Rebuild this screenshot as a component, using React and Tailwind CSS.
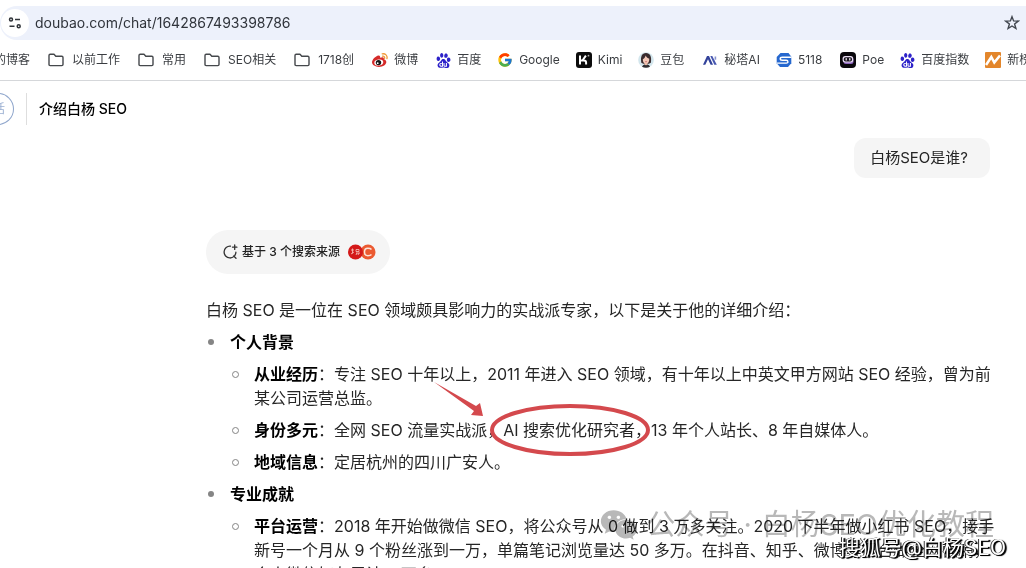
import { FaWeixin } from 'react-icons/fa';
import { SiBaidu } from 'react-icons/si';
import { FcGoogle } from 'react-icons/fc';

function FolderIcon() {
  return (
    <svg viewBox="0 0 16 16" className="w-4 h-4 shrink-0" fill="none" stroke="#45484c" strokeWidth="1.4" strokeLinejoin="round">
      <path d="M1 3.6Q1 2.3 2.2 2.3H6l1.8 2h6Q15 4.3 15 5.5v7q0 1.1-1.2 1.1H2.2Q1 13.600 1 12.5Z" />
    </svg>
  );
}

function WeiboIcon() {
  return (
    <svg viewBox="0 0 16 16" className="w-4 h-4 shrink-0">
      <path d="M6.5 3.400C3.500 3.900 0 7.500 0 10.300c0 2.700 3.200 4.600 6.900 4.600 4.200 0 7.400-2.400 7.400-4.900 0-1.500-1.200-2.400-2.500-2.700.5-1.700-.5-2.900-3.700-1.600.3-1.400-.2-2.500-1.600-2.300Z" fill="#d52b2a" />
      <ellipse cx="6.800" cy="10.500" rx="4.500" ry="3" fill="#fff" transform="rotate(-8 6.800 10.500)" />
      <circle cx="6.500" cy="10.600" r="2.700" fill="#161616" />
      <circle cx="5.700" cy="11.200" r=".9" fill="#fff" />
      <path d="M10.200 1.900c3-.8 5.600 1.700 4.700 4.800M10.500 4.200c1.500-.3 2.500.7 2.100 2.100" fill="none" stroke="#f19a38" strokeWidth="1.3" strokeLinecap="round" />
    </svg>
  );
}

function BaiduIcon() {
  return <SiBaidu className="w-[15px] h-[15px] shrink-0" color="#2d22c9" />;
}

function GoogleIcon() {
  return <FcGoogle className="w-4 h-4 shrink-0" />;
}

function KimiIcon() {
  return (
    <svg viewBox="0 0 16 16" className="w-4 h-4 shrink-0">
      <rect width="16" height="16" rx="3" fill="#0c0c0c" />
      <path d="M4 3.5v9M4.500 8.6h3.400q2.200 0 2.200 2v1.900M6.800 8 9.900 3.7" fill="none" stroke="#fff" strokeWidth="2" />
      <circle cx="12.500" cy="3.700" r=".9" fill="#aaa" />
    </svg>
  );
}

function DoubaoIcon() {
  return (
    <svg viewBox="0 0 16 16" className="w-4 h-4 shrink-0">
      <circle cx="8" cy="8" r="7.800" fill="#d3e6ed" />
      <path d="M3.300 10.800C2.300 4.500 3.800 1 8 1s5.700 3.500 4.900 9.800l-2 1H5.200Z" fill="#3a2c2e" />
      <path d="M4.800 7.200C6.700 6.500 7.300 4.800 7.600 3.500c1 1.900 2.300 2.700 3.700 3.300 0 3.200-1.200 5-3.300 5s-3.200-1.800-3.200-4.600Z" fill="#f3c9b9" />
      <path d="M6.700 11h2.600l.3 2H6.300Z" fill="#edbda9" />
      <path d="M4 14.800q.8-2.100 2.500-2.300 1.500 1.300 3 0 2 .2 2.500 2.300-4 1.900-8 0Z" fill="#302c30" />
      <path d="M7.200 9.700h1.700" stroke="#b9474e" strokeWidth=".7" />
    </svg>
  );
}

function MetasoIcon() {
  return (
    <svg viewBox="0 0 16 16" className="w-4 h-4 shrink-0">
      <path d="M1 12.800 5 4h2l4 8.800H8.600L6 7.200l-2.700 5.600Z" fill="#33439b" />
      <path d="M8.300 4h2l4.500 8.800h-2.500Z" fill="#4757b0" />
      <path d="M12.600 4.500h1.600v3.200h-1.600Z" fill="#8994cf" />
    </svg>
  );
}

function Icon5118() {
  return (
    <svg viewBox="0 0 16 16" className="w-4 h-4 shrink-0">
      <path d="M4.500 1h8l2.800 3.700v6.500L12 15H4L.7 11.300V5Z" fill="#2668cf" />
      <path d="M15.500 5.200H6.200q-2 0-2 1.500t2 1.500h4q1.700 0 1.700 1.500t-1.700 1.400H.7" fill="none" stroke="#fff" strokeWidth="1.4" />
    </svg>
  );
}

function PoeIcon() {
  return (
    <svg viewBox="0 0 16 16" className="w-4 h-4 shrink-0">
      <rect width="16" height="16" rx="4" fill="#0a080c" />
      <rect x="3.500" y="5.200" width="10" height="6.800" rx="2.500" fill="#8d64bd" />
      <rect x="2.600" y="4" width="10.600" height="6.600" rx="2.500" fill="#e8dcf2" />
      <rect x="3.800" y="5.200" width="8.200" height="4.200" rx="1.700" fill="#19131e" />
      <path d="M6.200 6.500V8M9.800 6.500V8" stroke="#fff" strokeWidth="1.2" strokeLinecap="round" />
    </svg>
  );
}

function NewrankIcon() {
  return (
    <svg viewBox="0 0 16 16" className="w-4 h-4 shrink-0">
      <rect width="16" height="16" rx="1" fill="#e3862b" />
      <path d="m1 13 5.300-8 3 5.500 5.700-7" fill="none" stroke="#fff" strokeWidth="2.6" />
    </svg>
  );
}

const bookmarks = [
  { name: '以前工作', icon: FolderIcon, gap: 'gap-2', margin: 'mr-[18px]' },
  { name: '常用', icon: FolderIcon, gap: 'gap-2', margin: 'mr-[18px]' },
  { name: 'SEO相关', icon: FolderIcon, gap: 'gap-2', margin: 'mr-[18px]' },
  { name: '1718创', icon: FolderIcon, gap: 'gap-2', margin: 'mr-[18px]' },
  { name: '微博', icon: WeiboIcon, gap: 'gap-1.5', margin: 'mr-[18px]' },
  { name: '百度', icon: BaiduIcon, gap: 'gap-1.5', margin: 'mr-4' },
  { name: 'Google', icon: GoogleIcon, gap: 'gap-1.5', margin: 'mr-4' },
  { name: 'Kimi', icon: KimiIcon, gap: 'gap-1.5', margin: 'mr-4' },
  { name: '豆包', icon: DoubaoIcon, gap: 'gap-1.5', margin: 'mr-[18px]' },
  { name: '秘塔AI', icon: MetasoIcon, gap: 'gap-1.5', margin: 'mr-4' },
  { name: '5118', icon: Icon5118, gap: 'gap-1.5', margin: 'mr-[18px]' },
  { name: 'Poe', icon: PoeIcon, gap: 'gap-1.5', margin: 'mr-4' },
  { name: '百度指数', icon: BaiduIcon, gap: 'gap-1.5', margin: 'mr-4' },
  { name: '新榜', icon: NewrankIcon, gap: 'gap-1.5', margin: 'mr-4' },
];

function Detail({ label, children }) {
  return (
    <li className="relative pl-6 mb-2">
      <span className="absolute left-[2px] top-[9px] w-[7px] h-[7px] rounded-full border border-[#858585]" />
      <strong className="font-bold text-black">{label}</strong>：{children}
    </li>
  );
}

function Section({ title, children }) {
  return (
    <li className="relative pl-6">
      <span className="absolute left-[2px] top-[9px] w-[6px] h-[6px] rounded-full bg-[#858585]" />
      <h3 className="mb-2 font-bold text-black">{title}</h3>
      <ul>{children}</ul>
    </li>
  );
}

function App() {
  return (
    <div className="relative h-screen overflow-hidden bg-white font-[Inter,'Noto_Sans_CJK_SC',sans-serif] text-[#262626]">
      {/* Address bar */}
      <header className="border-b border-[#d5d7da] pt-1.5">
        <div className="flex h-[34px] items-center rounded-l-full bg-[#edf1fb] pr-1.5">
          <button type="button" aria-label="Site information" className="flex w-7 h-7 ml-px shrink-0 items-center justify-center rounded-full bg-white">
            <svg viewBox="0 0 14 14" className="w-3.5 h-3.5" fill="none" stroke="#303439" strokeWidth="1.5">
              <circle cx="3" cy="3.500" r="1.500" />
              <path d="M7 3.500h5M1.500 10.300h5" />
              <circle cx="10.700" cy="10.300" r="1.500" />
            </svg>
          </button>
          <input
            aria-label="Address"
            defaultValue="doubao.com/chat/1642867493398786"
            className="ml-1.5 min-w-0 flex-1 bg-transparent text-sm text-[#30343b] outline-none"
          />
          <button type="button" aria-label="Bookmark">
            <svg viewBox="0 0 16 16" className="w-4 h-4" fill="none" stroke="#41464e" strokeWidth="1.4">
              <path d="m8 1.700 1.600 4.200 4.700.2-3.700 2.900 1.300 4.500L8 11l-3.900 2.500L5.400 9 1.700 6.100l4.700-.2Z" />
            </svg>
          </button>
        </div>
        <nav className="flex h-10 items-center whitespace-nowrap text-xs text-[#3a3d41]">
          <a href="#blog" className="-ml-1.5 mr-[18px]">的博客</a>
          {bookmarks.map(({ name, icon: Icon, gap, margin }) => (
            <a key={name} href="#bookmark" className={`flex shrink-0 items-center ${gap} ${margin}`}>
              <Icon />
              {name}
            </a>
          ))}
        </nav>
      </header>

      {/* Conversation title */}
      <div className="flex h-14 items-center">
        <button type="button" className="-ml-5 h-8 w-[34px] rounded-r-full border border-l-0 border-[#8fa6cc] pr-2 text-right text-xs text-[#9bb0d2]">话</button>
        <span className="ml-3 mr-3 h-8 w-px bg-[#dedede]" />
        <h1 className="text-sm font-medium text-black">介绍白杨 SEO</h1>
      </div>

      <main className="pl-[206px] pr-9 pt-px">
        <div className="flex justify-end">
          <p className="rounded-xl bg-[#f5f5f5] py-2 pl-4 pr-[22px] text-[15px] leading-6">白杨SEO是谁?</p>
        </div>

        <button type="button" className="mt-[52px] flex h-11 items-center rounded-full bg-[#f5f5f5] pl-4 pr-3.5 text-xs font-medium text-[#222]">
          <svg viewBox="0 0 16 16" className="mr-1 w-4 h-4" fill="none" stroke="#333" strokeWidth="1.3" strokeLinecap="round">
            <path d="M8.500 2.200a5.900 5.900 0 1 0 5.400 6M11.700 12l2.300 2.300M12.700 1v4.400M10.500 3.200h4.400" />
          </svg>
          基于 3 个搜索来源
          <svg viewBox="0 0 28 16" className="ml-2 h-4 w-7">
            <circle cx="20" cy="8" r="7.500" fill="#eb5a31" />
            <path d="M23.500 5.500q-1-1.200-3.700-1.200-3.300 0-3.300 3.700t3.300 3.700q2.700 0 3.700-1.200" fill="none" stroke="#fbe3da" strokeWidth="1.5" />
            <circle cx="7.500" cy="8" r="7.500" fill="#d41919" />
            <path d="M3 6h3M4.500 4.500v5M3 10l3-2M8 5.500h3v2H8zM8 9h4M9 9l-1 2M11 9l-1 2" fill="none" stroke="#f7c5bd" strokeWidth=".8" />
          </svg>
        </button>

        <article className="-mr-2 mt-6 text-base leading-6">
          <p className="mb-2">白杨 SEO 是一位在 SEO 领域颇具影响力的实战派专家，以下是关于他的详细介绍：</p>
          <ul>
            <Section title="个人背景">
              <Detail label="从业经历">专注 SEO 十年以上，2011 年进入 SEO 领域，有十年以上中英文甲方网站 SEO 经验，曾为前某公司运营总监。</Detail>
              <Detail label="身份多元">
                全网 SEO 流量实战派，
                <span className="relative">
                  AI 搜索优化研究者，
                  <svg viewBox="0 0 220 80" className="pointer-events-none absolute -left-[70px] -top-10 h-20 w-[220px] max-w-none" fill="none">
                    <path d="M1 2 43 26l4-3 3 13-12-1 3-4Z" fill="#d4494d" />
                    <ellipse cx="137" cy="50" rx="78" ry="24" stroke="#d4494d" strokeWidth="4" />
                  </svg>
                </span>
                13 年个人站长、8 年自媒体人。
              </Detail>
              <Detail label="地域信息">定居杭州的四川广安人。</Detail>
            </Section>
            <Section title="专业成就">
              <Detail label="平台运营">2018 年开始做微信 SEO，将公众号从 0 做到 3 万多关注。2020 下半年做小红书 SEO，接手新号一个月从 9 个粉丝涨到一万，单篇笔记浏览量达 50 多万。在抖音、知乎、微博等平台做全网营销，个人微信好友累计 2 万多。</Detail>
            </Section>
          </ul>
        </article>
      </main>

      {/* Watermarks */}
      <div className="pointer-events-none absolute bottom-6 right-8 flex items-center whitespace-nowrap text-[29px] leading-9 text-[#888]/60 mix-blend-multiply">
        <FaWeixin className="mr-2 h-[38px] w-[38px]" />
        <span>公众号</span>
        <span className="mx-2.5">·</span>
        <span>白杨SEO优化教程</span>
      </div>
      <p className="pointer-events-none absolute bottom-1 right-5 whitespace-nowrap text-[21px] leading-8 text-white [text-shadow:1px_1px_0_#000,2px_1px_1px_#000,-1px_0_0_#333]">搜狐号@白杨SEO</p>
    </div>
  );
}

export default App;
